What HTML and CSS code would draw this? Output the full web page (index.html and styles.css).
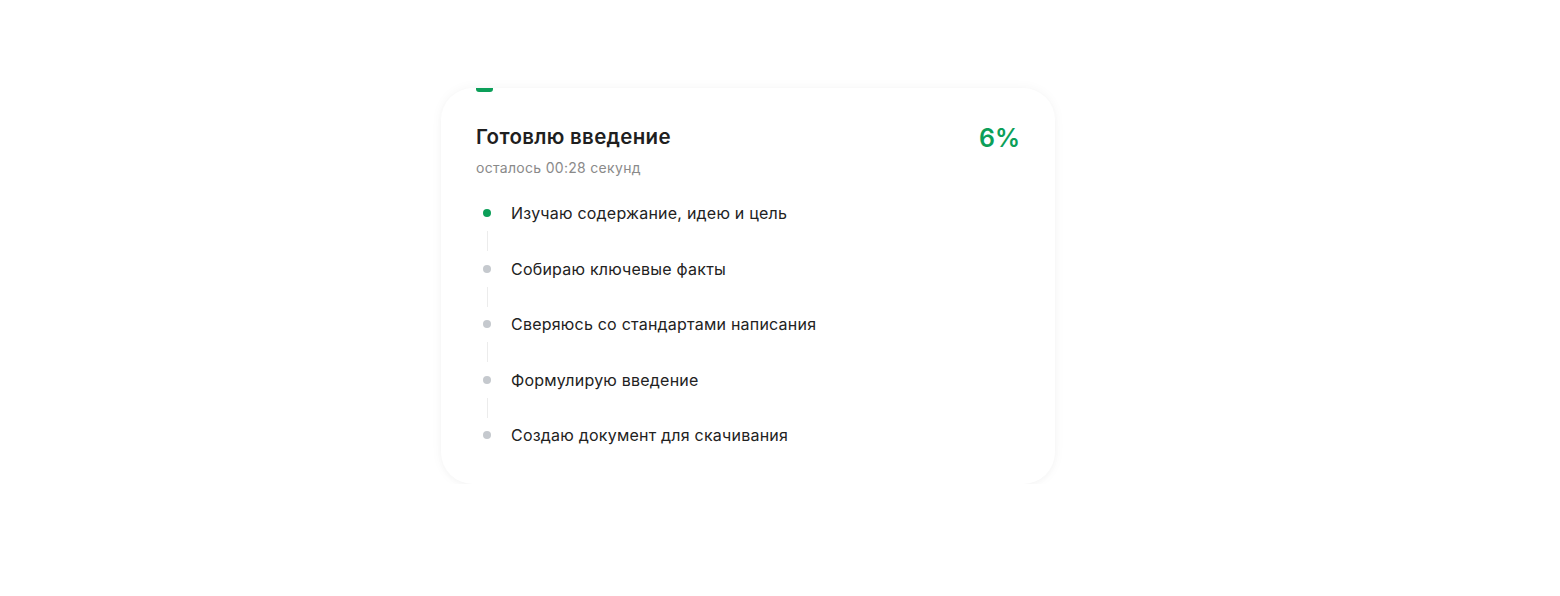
FILE: index.html
```html
<!DOCTYPE html>
<html lang="ru">
<head>
<meta charset="utf-8">
<link rel="stylesheet" href="styles.css">
</head>
<body>
<div class="page">
  <div class="card">
    <div class="progress"><div class="progress-fill"></div></div>
    <div class="head">
      <div class="head-text">
        <div class="title">Готовлю введение</div>
        <div class="subtitle">осталось 00:28 секунд</div>
      </div>
      <div class="percent">6%</div>
    </div>
    <div class="steps">
      <div class="step active"><span class="dot"></span><span class="label">Изучаю содержание, идею и цель</span></div>
      <div class="connector"></div>
      <div class="step"><span class="dot"></span><span class="label">Собираю ключевые факты</span></div>
      <div class="connector"></div>
      <div class="step"><span class="dot"></span><span class="label">Сверяюсь со стандартами написания</span></div>
      <div class="connector"></div>
      <div class="step"><span class="dot"></span><span class="label">Формулирую введение</span></div>
      <div class="connector"></div>
      <div class="step"><span class="dot"></span><span class="label">Создаю документ для скачивания</span></div>
    </div>
  </div>
</div>
</body>
</html>
```

FILE: styles.css
```css
* { box-sizing: border-box; }
html, body { margin: 0; padding: 0; background: #fff; }
body { font-family: Inter, "Noto Sans", "Liberation Sans", sans-serif; color: #222; }
.page { padding: 88px 0 0 441px; }
.card {
  width: 614px;
  height: 396px;
  background: #fff;
  border-radius: 32px;
  box-shadow: 0 0 12px rgba(0,0,0,0.045), 0 2px 6px rgba(0,0,0,0.02);
  padding: 0 35px 0 35px;
}
.progress { height: 4px; }
.progress-fill { width: 17px; height: 4px; background: #0c9f59; border-radius: 0 0 3px 3px; }
.head { display: flex; justify-content: space-between; align-items: flex-start; margin-top: 32px; }
.title { font-size: 20.5px; line-height: 26px; font-weight: 600; color: #1f1f1f; letter-spacing: 0.3px; }
.subtitle { font-size: 14px; line-height: 20px; color: #8a8a8a; margin-top: 8px; letter-spacing: 0.3px; }
.percent { font-size: 25px; line-height: 28px; font-weight: 600; color: #0c9f59; margin-top: 0; }
.steps { margin-top: 23px; display: flex; flex-direction: column; }
.step { display: flex; align-items: center; height: 24px; }
.dot { width: 8px; height: 8px; border-radius: 50%; background: #c5c9ce; margin-left: 7px; margin-right: 20px; flex: none; }
.step.active .dot { background: #0c9f59; }
.label { font-size: 16px; line-height: 24px; color: #222; letter-spacing: 0.22px; }
.connector { width: 1px; height: 20px; margin: 6px 0 5.5px 11px; background: #ececec; }
```
